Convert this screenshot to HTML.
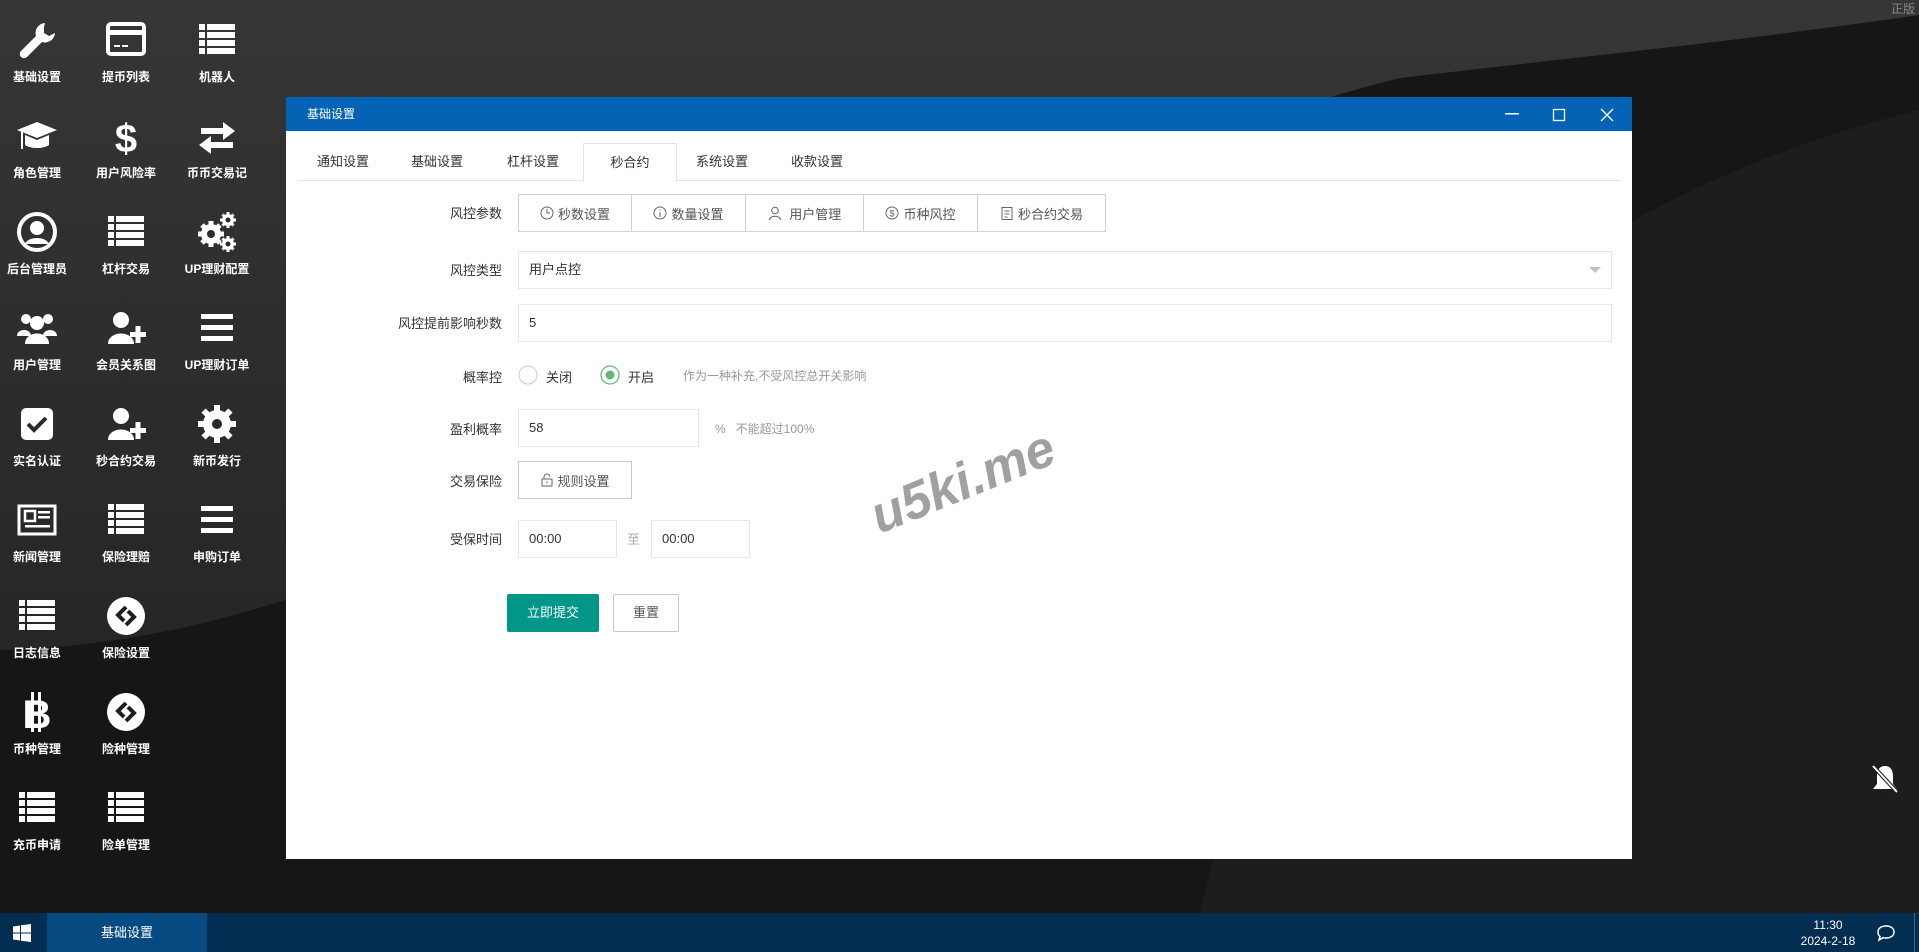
<!DOCTYPE html>
<html><head><meta charset="utf-8">
<style>
*{margin:0;padding:0;box-sizing:border-box}
body{width:1919px;height:952px;overflow:hidden;position:relative;font-family:"Liberation Sans","Noto Sans CJK SC",sans-serif;background:#1b1b1b}
.bg{position:absolute;left:0;top:0}
.di{position:absolute;width:90px;text-align:center;color:#fff;font-size:12px;font-weight:bold}
.di svg{display:block;margin:0 auto 6px;width:44px;height:44px}
.dlg{position:absolute;left:286px;top:97px;width:1346px;height:762px;background:#fff}
.tb{height:34px;background:#0563b6;color:#fff;font-size:12px;line-height:34px;padding-left:21px;position:relative}
.tabs{position:absolute;top:46px;left:11px;right:11px;height:38px;border-bottom:1px solid #e4e4e4}
.tab{position:absolute;top:0;height:38px;line-height:38px;font-size:13px;color:#333}
.tab.act{border:1px solid #e4e4e4;border-bottom:1px solid #fff;background:#fff;height:39px;text-align:center}
.lbl{position:absolute;right:1130px;font-size:13px;color:#333;text-align:right;white-space:nowrap}
.inp{position:absolute;border:1px solid #e6e6e6;font-size:13px;color:#333;padding-left:10px;background:#fff}
.bg2{position:absolute;left:232px;top:97px;height:38px;border:1px solid #d2d2d2;display:flex}
.bg2 div{border-right:1px solid #d2d2d2;font-size:13px;color:#555;display:flex;align-items:center;justify-content:center;gap:4px}
.bg2 div:last-child{border-right:none}
.bg2 svg{width:14px;height:14px}
.tbar{position:absolute;left:0;top:913px;width:1919px;height:39px;background:#042d52}
</style></head><body>
<svg class="bg" width="1919" height="952" viewBox="0 0 1919 952">
<defs>
<linearGradient id="g1" x1="0" y1="0" x2="0" y2="1"><stop offset="0" stop-color="#363636"/><stop offset="1" stop-color="#262626"/></linearGradient>
</defs>
<rect width="1919" height="952" fill="#161616"/>
<path d="M0 0H1919V15C1750 40 1550 60 1400 78C900 200 500 640 0 650Z" fill="url(#g1)"/>
<path d="M1919 110C1800 140 1700 180 1600 240C1450 330 1300 500 1200 913H1919Z" fill="#1d1d1d"/>
</svg>

<!-- desktop icons -->
<div class="di" style="left:-8px;top:18px"><svg viewBox="0 0 44 44"><path d="M30 5a10 10 0 0 0-9 13L6 33a4 4 0 0 0 6 6l15-15a10 10 0 0 0 13-9l-6 3-5-3v-6z" fill="#fff"/></svg>基础设置</div>
<div class="di" style="left:81px;top:18px"><svg viewBox="0 0 44 44"><rect x="4" y="6" width="36" height="30" rx="3" fill="none" stroke="#fff" stroke-width="4"/><rect x="4" y="12" width="36" height="5" fill="#fff"/><rect x="10" y="27" width="6" height="2" fill="#fff"/><rect x="18" y="27" width="6" height="2" fill="#fff"/></svg>提币列表</div>
<div class="di" style="left:172px;top:18px"><svg viewBox="0 0 44 44" fill="#fff"><rect x="4" y="6" width="6" height="6"/><rect x="12" y="6" width="28" height="6"/><rect x="4" y="14" width="6" height="6"/><rect x="12" y="14" width="28" height="6"/><rect x="4" y="22" width="6" height="6"/><rect x="12" y="22" width="28" height="6"/><rect x="4" y="30" width="6" height="6"/><rect x="12" y="30" width="28" height="6"/></svg>机器人</div>

<div class="di" style="left:-8px;top:114px"><svg viewBox="0 0 44 44" fill="#fff"><path d="M2 16L22 8l20 8-20 8z"/><path d="M10 21v10c6 4 18 4 24 0V21l-12 5z"/><rect x="6" y="17" width="2" height="18"/></svg>角色管理</div>
<div class="di" style="left:81px;top:114px"><svg viewBox="0 0 44 44"><text x="22" y="38" text-anchor="middle" font-size="40" font-weight="bold" fill="#fff" font-family="Liberation Sans">$</text></svg>用户风险率</div>
<div class="di" style="left:172px;top:114px"><svg viewBox="0 0 44 44" fill="#fff"><path d="M6 14h22V8l12 9-12 9v-6H6z"/><path d="M38 26H16v-6L4 29l12 9v-6h22z" transform="translate(0,2)"/></svg>币币交易记</div>

<div class="di" style="left:-8px;top:210px"><svg viewBox="0 0 44 44"><circle cx="22" cy="22" r="18" fill="none" stroke="#fff" stroke-width="4"/><circle cx="22" cy="18" r="7" fill="#fff"/><path d="M10 34c3-8 21-8 24 0" fill="#fff"/></svg>后台管理员</div>
<div class="di" style="left:81px;top:210px"><svg viewBox="0 0 44 44" fill="#fff"><rect x="4" y="6" width="6" height="6"/><rect x="12" y="6" width="28" height="6"/><rect x="4" y="14" width="6" height="6"/><rect x="12" y="14" width="28" height="6"/><rect x="4" y="22" width="6" height="6"/><rect x="12" y="22" width="28" height="6"/><rect x="4" y="30" width="6" height="6"/><rect x="12" y="30" width="28" height="6"/></svg>杠杆交易</div>
<div class="di" style="left:172px;top:210px"><svg viewBox="0 0 44 44"><g fill="#fff"><circle cx="16" cy="24" r="10"/><g stroke="#fff" stroke-width="5"><path d="M16 11v26M3 24h26M7 15l18 18M25 15L7 33"/></g><circle cx="33" cy="10" r="6"/><path d="M33 2v16M25 10h16M27.5 4.5l11 11M38.5 4.5l-11 11" stroke="#fff" stroke-width="3"/><circle cx="33" cy="34" r="6"/><path d="M33 26v16M25 34h16M27.5 28.5l11 11M38.5 28.5l-11 11" stroke="#fff" stroke-width="3"/></g><circle cx="16" cy="24" r="4" fill="#2b2b2b"/><circle cx="33" cy="10" r="2.5" fill="#2b2b2b"/><circle cx="33" cy="34" r="2.5" fill="#2b2b2b"/></svg>UP理财配置</div>

<div class="di" style="left:-8px;top:306px"><svg viewBox="0 0 44 44" fill="#fff"><circle cx="11" cy="13" r="5"/><circle cx="33" cy="13" r="5"/><circle cx="22" cy="17" r="7"/><path d="M2 30c0-8 14-8 14 0zM28 30c0-8 14-8 14 0z"/><path d="M10 38c0-14 24-14 24 0z"/></svg>用户管理</div>
<div class="di" style="left:81px;top:306px"><svg viewBox="0 0 44 44" fill="#fff"><circle cx="17" cy="14" r="8"/><path d="M4 38c0-14 26-14 26 0z"/><rect x="26" y="26" width="16" height="5"/><rect x="31.5" y="20" width="5" height="17"/></svg>会员关系图</div>
<div class="di" style="left:172px;top:306px"><svg viewBox="0 0 44 44" fill="#fff"><rect x="6" y="8" width="32" height="5"/><rect x="6" y="19" width="32" height="5"/><rect x="6" y="30" width="32" height="5"/></svg>UP理财订单</div>

<div class="di" style="left:-8px;top:402px"><svg viewBox="0 0 44 44"><rect x="6" y="6" width="32" height="32" rx="5" fill="#fff"/><path d="M13 22l6 6 12-12" stroke="#2a2a2a" stroke-width="4" fill="none"/></svg>实名认证</div>
<div class="di" style="left:81px;top:402px"><svg viewBox="0 0 44 44" fill="#fff"><circle cx="17" cy="14" r="8"/><path d="M4 38c0-14 26-14 26 0z"/><rect x="26" y="26" width="16" height="5"/><rect x="31.5" y="20" width="5" height="17"/></svg>秒合约交易</div>
<div class="di" style="left:172px;top:402px"><svg viewBox="0 0 44 44"><circle cx="22" cy="22" r="14" fill="#fff"/><g fill="#fff"><rect x="19" y="3" width="6" height="38"/><rect x="3" y="19" width="38" height="6"/><rect x="19" y="3" width="6" height="38" transform="rotate(45 22 22)"/><rect x="19" y="3" width="6" height="38" transform="rotate(-45 22 22)"/></g><circle cx="22" cy="22" r="5" fill="#2a2a2a"/></svg>新币发行</div>

<div class="di" style="left:-8px;top:498px"><svg viewBox="0 0 44 44"><rect x="4" y="8" width="36" height="28" fill="none" stroke="#fff" stroke-width="3"/><rect x="10" y="13" width="10" height="10" fill="none" stroke="#fff" stroke-width="2.5"/><g fill="#fff"><rect x="23" y="13" width="12" height="2.5"/><rect x="23" y="18" width="12" height="2.5"/><rect x="10" y="27" width="25" height="2.5"/></g></svg>新闻管理</div>
<div class="di" style="left:81px;top:498px"><svg viewBox="0 0 44 44" fill="#fff"><rect x="4" y="6" width="6" height="6"/><rect x="12" y="6" width="28" height="6"/><rect x="4" y="14" width="6" height="6"/><rect x="12" y="14" width="28" height="6"/><rect x="4" y="22" width="6" height="6"/><rect x="12" y="22" width="28" height="6"/><rect x="4" y="30" width="6" height="6"/><rect x="12" y="30" width="28" height="6"/></svg>保险理赔</div>
<div class="di" style="left:172px;top:498px"><svg viewBox="0 0 44 44" fill="#fff"><rect x="6" y="8" width="32" height="5"/><rect x="6" y="19" width="32" height="5"/><rect x="6" y="30" width="32" height="5"/></svg>申购订单</div>

<div class="di" style="left:-8px;top:594px"><svg viewBox="0 0 44 44" fill="#fff"><rect x="4" y="6" width="6" height="6"/><rect x="12" y="6" width="28" height="6"/><rect x="4" y="14" width="6" height="6"/><rect x="12" y="14" width="28" height="6"/><rect x="4" y="22" width="6" height="6"/><rect x="12" y="22" width="28" height="6"/><rect x="4" y="30" width="6" height="6"/><rect x="12" y="30" width="28" height="6"/></svg>日志信息</div>
<div class="di" style="left:81px;top:594px"><svg viewBox="0 0 44 44"><circle cx="22" cy="22" r="19" fill="#fff"/><path d="M22 13l-8 8 6 6M22 31l8-8-6-6" stroke="#1e1e1e" stroke-width="4" fill="none"/></svg>保险设置</div>

<div class="di" style="left:-8px;top:690px"><svg viewBox="0 0 44 44"><text x="22" y="38" text-anchor="middle" font-size="40" font-weight="bold" fill="#fff" font-family="Liberation Sans">B</text><rect x="16" y="2" width="3" height="40" fill="#fff"/><rect x="23" y="2" width="3" height="40" fill="#fff"/></svg>币种管理</div>
<div class="di" style="left:81px;top:690px"><svg viewBox="0 0 44 44"><circle cx="22" cy="22" r="19" fill="#fff"/><path d="M22 13l-8 8 6 6M22 31l8-8-6-6" stroke="#1e1e1e" stroke-width="4" fill="none"/></svg>险种管理</div>

<div class="di" style="left:-8px;top:786px"><svg viewBox="0 0 44 44" fill="#fff"><rect x="4" y="6" width="6" height="6"/><rect x="12" y="6" width="28" height="6"/><rect x="4" y="14" width="6" height="6"/><rect x="12" y="14" width="28" height="6"/><rect x="4" y="22" width="6" height="6"/><rect x="12" y="22" width="28" height="6"/><rect x="4" y="30" width="6" height="6"/><rect x="12" y="30" width="28" height="6"/></svg>充币申请</div>
<div class="di" style="left:81px;top:786px"><svg viewBox="0 0 44 44" fill="#fff"><rect x="4" y="6" width="6" height="6"/><rect x="12" y="6" width="28" height="6"/><rect x="4" y="14" width="6" height="6"/><rect x="12" y="14" width="28" height="6"/><rect x="4" y="22" width="6" height="6"/><rect x="12" y="22" width="28" height="6"/><rect x="4" y="30" width="6" height="6"/><rect x="12" y="30" width="28" height="6"/></svg>险单管理</div>

<div style="position:absolute;right:4px;top:0;color:#888;font-size:12px">正版</div>

<svg style="position:absolute;left:1868px;top:762px" width="34" height="34" viewBox="0 0 34 34"><path d="M17 4c-6 0-8 5-8 10v8l-4 5h24l-4-5v-8c0-5-2-10-8-10z" fill="#fff"/><path d="M5 4l24 26" stroke="#1c1c1c" stroke-width="4"/><path d="M5 4l24 26" stroke="#fff" stroke-width="2"/></svg>

<div class="dlg">
 <div class="tb">基础设置
  <svg style="position:absolute;left:1218px;top:9px" width="16" height="16"><rect x="1" y="7" width="14" height="1.5" fill="#fff"/></svg>
  <svg style="position:absolute;left:1265px;top:9px" width="16" height="16"><rect x="2.5" y="3.5" width="11" height="11" fill="none" stroke="#fff" stroke-width="1.3"/></svg>
  <svg style="position:absolute;left:1313px;top:9px" width="16" height="16"><path d="M2 3l12 12M14 3L2 15" stroke="#fff" stroke-width="1.4"/></svg>
 </div>
 <div class="tabs">
  <div class="tab" style="left:20px">通知设置</div>
  <div class="tab" style="left:114px">基础设置</div>
  <div class="tab" style="left:210px">杠杆设置</div>
  <div class="tab act" style="left:286px;width:94px">秒合约</div>
  <div class="tab" style="left:399px">系统设置</div>
  <div class="tab" style="left:494px">收款设置</div>
 </div>
 <div style="position:absolute;left:0;top:0;width:100%;height:100%">
  <div class="lbl" style="top:106px">风控参数</div>
  <div class="bg2">
   <div style="width:113px"><svg viewBox="0 0 14 14"><circle cx="7" cy="7" r="6" fill="none" stroke="#666"/><path d="M7 3v4h3" stroke="#666" fill="none"/></svg>秒数设置</div>
   <div style="width:114px"><svg viewBox="0 0 14 14"><circle cx="7" cy="7" r="6" fill="none" stroke="#666"/><path d="M7 6v5M7 3.5v1" stroke="#666"/></svg>数量设置</div>
   <div style="width:118px"><svg viewBox="0 0 14 14"><circle cx="7" cy="4.5" r="3.3" fill="none" stroke="#666"/><path d="M1.5 14c0-5 11-5 11 0" stroke="#666" fill="none"/></svg>&nbsp;用户管理</div>
   <div style="width:114px"><svg viewBox="0 0 14 14"><circle cx="7" cy="7" r="6" fill="none" stroke="#666"/><text x="7" y="10.5" font-size="9" text-anchor="middle" fill="#666">$</text></svg>币种风控</div>
   <div style="width:127px"><svg viewBox="0 0 14 14"><rect x="2" y="1.5" width="10" height="12" fill="none" stroke="#666"/><path d="M4.5 5h5M4.5 8h5M4.5 11h3" stroke="#666"/></svg>秒合约交易</div>
  </div>
  <div class="lbl" style="top:163px">风控类型</div>
  <div class="inp" style="left:232px;top:154px;width:1094px;height:38px;line-height:36px">用户点控<svg style="position:absolute;right:10px;top:15px" width="12" height="7"><path d="M0 0h12L6 6z" fill="#c2c2c2"/></svg></div>
  <div class="lbl" style="top:216px">风控提前影响秒数</div>
  <div class="inp" style="left:232px;top:207px;width:1094px;height:38px;line-height:36px">5</div>
  <div class="lbl" style="top:270px">概率控</div>
  <svg style="position:absolute;left:232px;top:268px" width="20" height="20"><circle cx="10" cy="10" r="9" fill="#fff" stroke="#d2d2d2" stroke-width="1.2"/></svg>
  <div style="position:absolute;left:260px;top:270px;font-size:13px;color:#333">关闭</div>
  <svg style="position:absolute;left:314px;top:268px" width="20" height="20"><circle cx="10" cy="10" r="9" fill="#fff" stroke="#5fb878" stroke-width="1.2"/><circle cx="10" cy="10" r="4.5" fill="#5fb878"/></svg>
  <div style="position:absolute;left:342px;top:270px;font-size:13px;color:#333">开启</div>
  <div style="position:absolute;left:397px;top:270px;font-size:12px;color:#999">作为一种补充,不受风控总开关影响</div>
  <div class="lbl" style="top:322px">盈利概率</div>
  <div class="inp" style="left:232px;top:312px;width:181px;height:38px;line-height:36px">58</div>
  <div style="position:absolute;left:429px;top:323px;font-size:12px;color:#999">%&nbsp;&nbsp; 不能超过100%</div>
  <div class="lbl" style="top:374px">交易保险</div>
  <div style="position:absolute;left:232px;top:364px;width:114px;height:38px;border:1px solid #c9c9c9;font-size:13px;color:#555;display:flex;align-items:center;justify-content:center;gap:3px"><svg width="14" height="14" viewBox="0 0 14 14"><rect x="2" y="6" width="10" height="7" fill="none" stroke="#666"/><path d="M4 6V4a3 3 0 0 1 6 0" fill="none" stroke="#666"/><path d="M7 8.5v2" stroke="#666"/></svg>规则设置</div>
  <div class="lbl" style="top:432px">受保时间</div>
  <div class="inp" style="left:232px;top:423px;width:99px;height:38px;line-height:36px">00:00</div>
  <div style="position:absolute;left:341px;top:432px;font-size:13px;color:#aaa">至</div>
  <div class="inp" style="left:365px;top:423px;width:99px;height:38px;line-height:36px">00:00</div>
  <div style="position:absolute;left:221px;top:497px;width:92px;height:38px;background:#009688;color:#fff;font-size:13px;line-height:38px;text-align:center;border-radius:2px">立即提交</div>
  <div style="position:absolute;left:327px;top:497px;width:66px;height:38px;border:1px solid #c9c9c9;color:#555;font-size:13px;line-height:36px;text-align:center;border-radius:2px">重置</div>
  <div style="position:absolute;left:580px;top:355px;transform:rotate(-22deg);transform-origin:center;font-size:52px;font-weight:bold;color:#a0a0a0;font-family:'Liberation Sans',sans-serif;font-style:italic">u5ki.me</div>
 </div>
</div>

<div class="tbar">
 <svg style="position:absolute;left:13px;top:11px" width="18" height="18" viewBox="0 0 18 18" fill="#fff"><path d="M0 2.5l7-1V8.5H0zM8 1.3L18 0V8.5H8zM0 9.5h7v7l-7-1zM8 9.5h10V18L8 16.7z"/></svg>
 <div style="position:absolute;left:47px;top:0;width:160px;height:39px;background:#064a82;color:#fff;font-size:13px;line-height:39px;text-align:center">基础设置</div>
 <div style="position:absolute;left:1800px;top:4px;width:56px;color:#fff;font-size:12px;text-align:center;line-height:16px">11:30<br>2024-2-18</div>
 <svg style="position:absolute;left:1876px;top:10px" width="20" height="20" viewBox="0 0 20 20"><path d="M10 3c5 0 8 2.5 8 6s-3 6-8 6c-1 0-2 0-3-.3L3 17l1-3.5C2.5 12.5 2 11 2 9c0-3.5 3-6 8-6z" fill="none" stroke="#fff" stroke-width="1.5"/></svg>
 <div style="position:absolute;left:1914px;top:0;width:1px;height:39px;background:#3a6a94"></div>
</div>
</body></html>
